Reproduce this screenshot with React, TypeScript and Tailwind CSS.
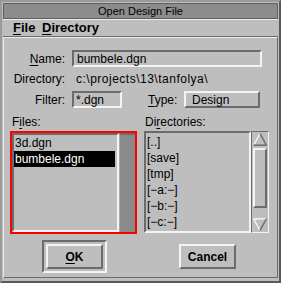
const sunken =
  'border-2 border-t-[#6b6b6b] border-l-[#6b6b6b] border-r-[#f4f4f4] border-b-[#f4f4f4]'
const raised =
  'border-2 border-t-[#f4f4f4] border-l-[#f4f4f4] border-r-[#6b6b6b] border-b-[#6b6b6b]'

const files = ['3d.dgn', 'bumbele.dgn']
const dirs = ['[..]', '[save]', '[tmp]', '[\u2212a:\u2212]', '[\u2212b:\u2212]', '[\u2212c:\u2212]']

function U({ children }: { children: string }) {
  return <span className="underline decoration-1 underline-offset-[2px]">{children}</span>
}

function UpArrow() {
  return (
    <svg width="16" height="13" viewBox="0 0 16 13" className="block">
      <line x1="8" y1="0.5" x2="1.5" y2="12.5" stroke="#f4f4f4" strokeWidth="1.5" />
      <line x1="8" y1="0.5" x2="14.5" y2="12.5" stroke="#6b6b6b" strokeWidth="1.5" />
      <line x1="1.5" y1="12.2" x2="14.5" y2="12.2" stroke="#6b6b6b" strokeWidth="1.5" />
    </svg>
  )
}

function DownArrow() {
  return (
    <svg width="16" height="13" viewBox="0 0 16 13" className="block">
      <line x1="1.5" y1="0.8" x2="14.5" y2="0.8" stroke="#f4f4f4" strokeWidth="1.5" />
      <line x1="1.5" y1="0.5" x2="8" y2="12.5" stroke="#f4f4f4" strokeWidth="1.5" />
      <line x1="14.5" y1="0.5" x2="8" y2="12.5" stroke="#6b6b6b" strokeWidth="1.5" />
    </svg>
  )
}

export default function App() {
  return (
    <div
      className="w-[281px] h-[283px] bg-[#bebebe] border-2 border-t-[#9a9a9a] border-l-[#9a9a9a] border-r-[#5a5a5a] border-b-[#5a5a5a] pt-[1px] pl-[1px] pr-[1px] pb-[3px] flex flex-col text-black text-[12px] leading-[16px]"
      style={{ fontFamily: '"Liberation Sans", Arial, sans-serif' }}
    >
      {/* title bar */}
      <div className="h-[16px] shrink-0 bg-[#8c8c8c] border border-[#5e5e5e] flex items-center justify-center text-[11px]">
        Open Design File
      </div>

      {/* menu bar */}
      <div className="h-[18px] shrink-0 border-t border-t-[#ececec] border-b border-b-[#6b6b6b] flex items-center pl-[10px] font-bold text-[13px]">
        <span className="w-[29px]">
          <U>F</U>ile
        </span>
        <span>
          <U>D</U>irectory
        </span>
      </div>

      {/* body */}
      <div className="flex-1 border border-t-[#ececec] border-l-[#ececec] border-r-[#6b6b6b] border-b-[#6b6b6b] flex flex-col">
        <div className="mt-[12px] h-[17px] flex items-center">
          <span className="w-[61px] text-right">
            <U>N</U>ame:
          </span>
          <div className={`ml-[7px] w-[190px] h-[17px] ${sunken} flex items-center pl-[3px]`}>
            bumbele.dgn
          </div>
        </div>

        <div className="mt-[3px] h-[18px] flex items-center">
          <span className="w-[61px] text-right">Directory:</span>
          <span className="ml-[11px] tracking-[0.5px]">c:\projects\13\tanfolya\</span>
        </div>

        <div className="mt-[3px] h-[17px] flex items-center">
          <span className="w-[61px] text-right">Filter:</span>
          <div className={`ml-[7px] w-[50px] h-[17px] ${sunken} flex items-center pl-[2px]`}>
            *.dgn
          </div>
          <span className="ml-[26px] w-[28px]">
            <U>T</U>ype:
          </span>
          <div className={`ml-[8px] w-[76px] h-[17px] ${raised} flex items-center pl-[6px]`}>
            Design
          </div>
        </div>

        <div className="mt-[6px] h-[16px] flex">
          <span className="w-[141px] pl-[8px]">
            F<U>i</U>les:
          </span>
          <span>
            Di<U>r</U>ectories:
          </span>
        </div>

        <div className="mt-[1px] flex">
          <div className="ml-[6px] w-[127px] h-[103px] border-2 border-[#ff0000] flex">
            <div className={`w-[107px] ${sunken} pr-[2px]`}>
              {files.map((f, i) => (
                <div
                  key={f}
                  className={`h-[16px] pl-[1px] ${i === 1 ? 'bg-black text-white' : ''}`}
                >
                  {f}
                </div>
              ))}
            </div>
            <div className="flex-1 bg-[#8a8a8a] border-t-2 border-t-[#6b6b6b] border-l border-l-[#a8a8a8]" />
          </div>

          <div className="ml-[7px] flex h-[102px]">
            <div className={`w-[107px] ${sunken} pt-[1px] pl-[1px]`}>
              {dirs.map((d) => (
                <div key={d} className="h-[16px]">
                  {d}
                </div>
              ))}
            </div>
            <div className="w-[18px] border border-t-[#6b6b6b] border-l-[#6b6b6b] border-r-[#f4f4f4] border-b-[#f4f4f4] flex flex-col justify-between pt-[1px] pb-[1px]">
              <div>
                <UpArrow />
                <div className={`mt-[2px] mx-[1px] h-[60px] ${raised}`} />
              </div>
              <DownArrow />
            </div>
          </div>
        </div>

        <div className="mt-[6px] flex font-bold">
          <div className="ml-[38px] w-[65px] h-[33px] border-2 border-t-[#6b6b6b] border-l-[#6b6b6b] border-r-[#f4f4f4] border-b-[#f4f4f4] p-[2px]">
            <div className={`w-full h-full ${raised} flex items-center justify-center`}>
              <U>O</U>K
            </div>
          </div>
          <div className={`ml-[72px] mt-[4px] w-[57px] h-[25px] ${raised} flex items-center justify-center`}>
            Cancel
          </div>
        </div>
      </div>
    </div>
  )
}
